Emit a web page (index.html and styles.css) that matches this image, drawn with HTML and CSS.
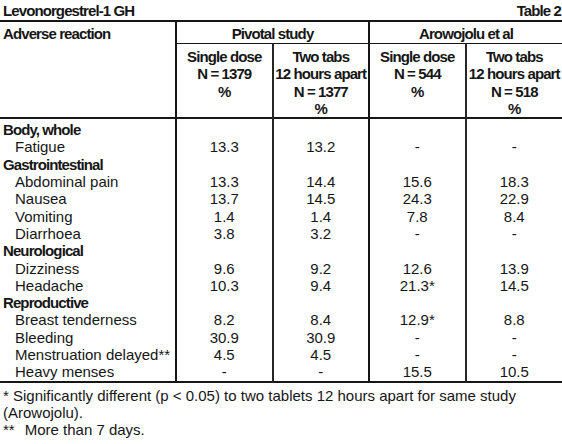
FILE: index.html
```html
<!DOCTYPE html>
<html lang="en">
<head>
    <meta charset="UTF-8">
    <meta name="viewport" content="width=device-width, initial-scale=1.0">
    <title>Levonorgestrel-1 GH - Table 2</title>
    <link rel="stylesheet" href="styles.css">
</head>
<body>
    <div class="caption">
        <span>Levonorgestrel-1 GH</span>
        <span>Table 2</span>
    </div>
    <table class="ae-table">
        <colgroup>
            <col class="col-name">
            <col class="col-val">
            <col class="col-val">
            <col class="col-val">
            <col class="col-val">
        </colgroup>
        <thead>
            <tr class="group-row">
                <th rowspan="2" class="name-head">Adverse reaction</th>
                <th colspan="2" class="group sep">Pivotal study</th>
                <th colspan="2" class="group sep">Arowojolu et al</th>
            </tr>
            <tr class="sub-row">
                <th class="sep">Single dose<br>N = 1379<br>%</th>
                <th class="sep-thin">Two tabs<br>12 hours apart<br>N = 1377<br>%</th>
                <th class="sep">Single dose<br>N = 544<br>%</th>
                <th class="sep-thin">Two tabs<br>12 hours apart<br>N = 518<br>%</th>
            </tr>
        </thead>
        <tbody>
            <tr class="cat first"><td>Body, whole</td><td class="sep"></td><td class="sep-thin"></td><td class="sep"></td><td class="sep-thin"></td></tr>
            <tr><td class="item">Fatigue</td><td class="sep">13.3</td><td class="sep-thin">13.2</td><td class="sep">-</td><td class="sep-thin">-</td></tr>
            <tr class="cat"><td>Gastrointestinal</td><td class="sep"></td><td class="sep-thin"></td><td class="sep"></td><td class="sep-thin"></td></tr>
            <tr><td class="item">Abdominal pain</td><td class="sep">13.3</td><td class="sep-thin">14.4</td><td class="sep">15.6</td><td class="sep-thin">18.3</td></tr>
            <tr><td class="item">Nausea</td><td class="sep">13.7</td><td class="sep-thin">14.5</td><td class="sep">24.3</td><td class="sep-thin">22.9</td></tr>
            <tr><td class="item">Vomiting</td><td class="sep">1.4</td><td class="sep-thin">1.4</td><td class="sep">7.8</td><td class="sep-thin">8.4</td></tr>
            <tr><td class="item">Diarrhoea</td><td class="sep">3.8</td><td class="sep-thin">3.2</td><td class="sep">-</td><td class="sep-thin">-</td></tr>
            <tr class="cat"><td>Neurological</td><td class="sep"></td><td class="sep-thin"></td><td class="sep"></td><td class="sep-thin"></td></tr>
            <tr><td class="item">Dizziness</td><td class="sep">9.6</td><td class="sep-thin">9.2</td><td class="sep">12.6</td><td class="sep-thin">13.9</td></tr>
            <tr><td class="item">Headache</td><td class="sep">10.3</td><td class="sep-thin">9.4</td><td class="sep">21.3*</td><td class="sep-thin">14.5</td></tr>
            <tr class="cat"><td>Reproductive</td><td class="sep"></td><td class="sep-thin"></td><td class="sep"></td><td class="sep-thin"></td></tr>
            <tr><td class="item">Breast tenderness</td><td class="sep">8.2</td><td class="sep-thin">8.4</td><td class="sep">12.9*</td><td class="sep-thin">8.8</td></tr>
            <tr><td class="item">Bleeding</td><td class="sep">30.9</td><td class="sep-thin">30.9</td><td class="sep">-</td><td class="sep-thin">-</td></tr>
            <tr><td class="item">Menstruation delayed**</td><td class="sep">4.5</td><td class="sep-thin">4.5</td><td class="sep">-</td><td class="sep-thin">-</td></tr>
            <tr class="last"><td class="item">Heavy menses</td><td class="sep">-</td><td class="sep-thin">-</td><td class="sep">15.5</td><td class="sep-thin">10.5</td></tr>
        </tbody>
    </table>
    <div class="notes">
        <p>* Significantly different (p &lt; 0.05) to two tablets 12 hours apart for same study<br>(Arowojolu).</p>
        <p>**<span class="gap"></span>More than 7 days.</p>
    </div>
</body>
</html>
```

FILE: styles.css
```css
body {
    margin: 0;
    background-color: #fff;
    color: #161616;
    font-family: "Liberation Sans", Arial, sans-serif;
    font-size: 15px;
}

.caption {
    display: flex;
    justify-content: space-between;
    padding: 2px 1px 0 3px;
    height: 18px;
    line-height: 18px;
    font-weight: bold;
    letter-spacing: -0.9px;
}

.ae-table {
    width: 562px;
    border-collapse: collapse;
    table-layout: fixed;
    border-top: 2px solid #161616;
    border-bottom: 2px solid #161616;
}

.col-name {
    width: 176px;
}

.col-val {
    width: 96.5px;
}

.ae-table th,
.ae-table td {
    padding: 0;
    line-height: 17.3px;
    text-align: center;
    vertical-align: top;
    white-space: nowrap;
}

.ae-table th {
    font-weight: bold;
    letter-spacing: -0.9px;
}

.sep {
    border-left: 2px solid #161616;
}

.sep-thin {
    border-left: 2px solid #262626;
}

.group-row th {
    padding-top: 3px;
    height: 18px;
}

.group {
    border-bottom: 1px solid #161616;
}

.ae-table th.name-head {
    text-align: left;
    padding-left: 3px;
}

.sub-row th {
    padding-top: 4px;
    height: 69px;
}

thead {
    border-bottom: 2px solid #161616;
}

.ae-table .cat td:first-child {
    text-align: left;
    font-weight: bold;
    letter-spacing: -0.9px;
    padding-left: 3px;
}

.ae-table td.item {
    text-align: left;
    padding-left: 15px;
}

.first td {
    padding-top: 2px;
}

.notes {
    padding: 4px 3px 0;
}

.notes p {
    margin: 0;
    line-height: 17px;
}

.gap {
    display: inline-block;
    width: 10px;
}
```
